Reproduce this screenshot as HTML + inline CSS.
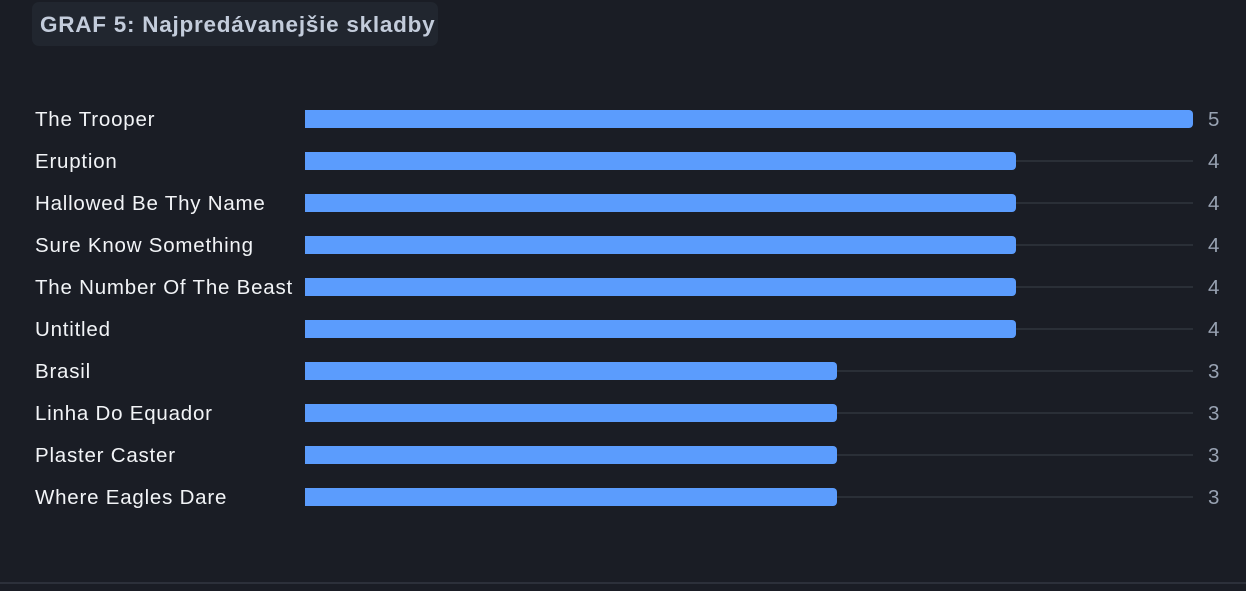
<!DOCTYPE html>
<html><head><style>
html,body{margin:0;padding:0;}
body{width:1246px;height:591px;background:#1a1d25;position:relative;overflow:hidden;font-family:"Liberation Sans",sans-serif;}
.title{position:absolute;left:32px;top:2px;width:406px;height:44px;background:#21262f;border-radius:7px;}
.title span{position:absolute;left:8px;top:10px;font-size:22.5px;font-weight:bold;color:#c3ccdb;white-space:nowrap;letter-spacing:0.75px;}
.row{position:absolute;left:0;width:1246px;height:18px;}
.lab{position:absolute;left:35px;top:-2px;font-size:20.5px;color:#f2f4f7;line-height:24px;white-space:nowrap;letter-spacing:0.78px;}
.track{position:absolute;left:305px;width:888px;top:8px;height:2px;background:#2a2f37;}
.bar{position:absolute;left:305px;top:0;height:18px;background:#5b9cfd;border-radius:0 4px 4px 0;}
.num{position:absolute;left:1208px;top:-2px;font-size:20.5px;color:#98a2b2;line-height:24px;}
.bot{position:absolute;left:0;top:582px;width:1246px;height:2px;background:#2c303a;}
</style></head><body>
<div class="title"><span>GRAF 5: Najpredávanejšie skladby</span></div>

<div class="row" style="top:110px"><div class="lab">The Trooper</div><div class="track"></div><div class="bar" style="width:888px"></div><div class="num">5</div></div>
<div class="row" style="top:152px"><div class="lab">Eruption</div><div class="track"></div><div class="bar" style="width:711px"></div><div class="num">4</div></div>
<div class="row" style="top:194px"><div class="lab">Hallowed Be Thy Name</div><div class="track"></div><div class="bar" style="width:711px"></div><div class="num">4</div></div>
<div class="row" style="top:236px"><div class="lab">Sure Know Something</div><div class="track"></div><div class="bar" style="width:711px"></div><div class="num">4</div></div>
<div class="row" style="top:278px"><div class="lab">The Number Of The Beast</div><div class="track"></div><div class="bar" style="width:711px"></div><div class="num">4</div></div>
<div class="row" style="top:320px"><div class="lab">Untitled</div><div class="track"></div><div class="bar" style="width:711px"></div><div class="num">4</div></div>
<div class="row" style="top:362px"><div class="lab">Brasil</div><div class="track"></div><div class="bar" style="width:532px"></div><div class="num">3</div></div>
<div class="row" style="top:404px"><div class="lab">Linha Do Equador</div><div class="track"></div><div class="bar" style="width:532px"></div><div class="num">3</div></div>
<div class="row" style="top:446px"><div class="lab">Plaster Caster</div><div class="track"></div><div class="bar" style="width:532px"></div><div class="num">3</div></div>
<div class="row" style="top:488px"><div class="lab">Where Eagles Dare</div><div class="track"></div><div class="bar" style="width:532px"></div><div class="num">3</div></div>

<div class="bot"></div>
</body></html>
